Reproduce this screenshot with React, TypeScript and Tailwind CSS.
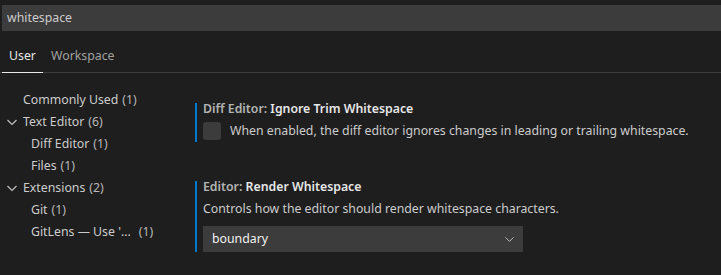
import { ChevronDown } from 'lucide-react'

const TOC = [
  { label: 'Commonly Used', count: 1, depth: 0, open: null },
  { label: 'Text Editor', count: 6, depth: 0, open: true },
  { label: 'Diff Editor', count: 1, depth: 1, open: null },
  { label: 'Files', count: 1, depth: 1, open: null },
  { label: 'Extensions', count: 2, depth: 0, open: true },
  { label: 'Git', count: 1, depth: 1, open: null },
  { label: "GitLens — Use '...", count: 1, depth: 1, open: null },
]

function Chevron() {
  return (
    <svg width="16" height="16" viewBox="0 0 16 16" className="text-[#c5c5c5]">
      <path d="M3.5 6l4.5 4.5L12.5 6" fill="none" stroke="currentColor" strokeWidth="1.1" />
    </svg>
  )
}

export default function App() {
  return (
    <div
      className="w-[721px] h-[275px] bg-[#1e1e1e] text-[12.3px] text-[#cccccc] overflow-hidden"
      style={{ fontFamily: '"Noto Sans", sans-serif' }}
    >
      <div className="pt-[5px] pl-[2px]">
        <div className="h-[26px] bg-[#3c3c3c] flex items-center pl-[5px] text-[#cccccc]">whitespace</div>
      </div>

      <div className="mt-[14px] flex border-b border-[#3c3c3c] h-[28px]">
        <div className="ml-[2px] w-[41px] flex items-start justify-center pt-[2px] text-[#e7e7e7] border-b-[1px] border-[#e7e7e7] -mb-px">
          User
        </div>
        <div className="ml-[8px] pt-[2px] text-[#a0a0a0]">Workspace</div>
      </div>

      <div className="flex mt-[16px]">
        <div className="w-[195px] shrink-0">
          {TOC.map((t) => (
            <div key={t.label} className="h-[22px] flex items-center">
              <div className={t.depth === 0 ? 'w-[23px] pl-[4px] flex' : 'w-[31px]'}>
                {t.open && <Chevron />}
              </div>
              <span className="whitespace-pre">{t.label}</span>
              <span className={t.label.endsWith('...') ? 'ml-[8px] text-[#b8b8b8]' : 'ml-[4px] text-[#b8b8b8]'}>
                ({t.count})
              </span>
            </div>
          ))}
        </div>

        <div className="flex-1 flex flex-col">
          <div className="mt-[14px] border-l-2 border-[#007acc] pl-[6px] h-[39px]">
            <div className="leading-[18px] -mt-[3px]">
              <span className="font-semibold text-[#b4b4b4]">Diff Editor: </span>
              <span className="font-semibold text-[#e7e7e7]">Ignore Trim Whitespace</span>
            </div>
            <div className="flex items-center mt-[4px]">
              <div className="w-[18px] h-[18px] rounded-[3px] bg-[#3c3c3c]" />
              <span className="ml-[9px]">When enabled, the diff editor ignores changes in leading or trailing whitespace.</span>
            </div>
          </div>

          <div className="mt-[39px] border-l-2 border-[#007acc] pl-[6px] h-[71px]">
            <div className="leading-[18px] -mt-[3px]">
              <span className="font-semibold text-[#b4b4b4]">Editor: </span>
              <span className="font-semibold text-[#e7e7e7]">Render Whitespace</span>
            </div>
            <div className="mt-[4px] leading-[18px]">Controls how the editor should render whitespace characters.</div>
            <div className="mt-[8px] w-[320px] h-[26px] bg-[#3c3c3c] flex items-center justify-between pl-[9px] pr-[6px] text-[#f0f0f0]">
              <span>boundary</span>
              <ChevronDown size={15} strokeWidth={1.5} className="text-[#c5c5c5]" />
            </div>
          </div>
        </div>
      </div>
    </div>
  )
}
